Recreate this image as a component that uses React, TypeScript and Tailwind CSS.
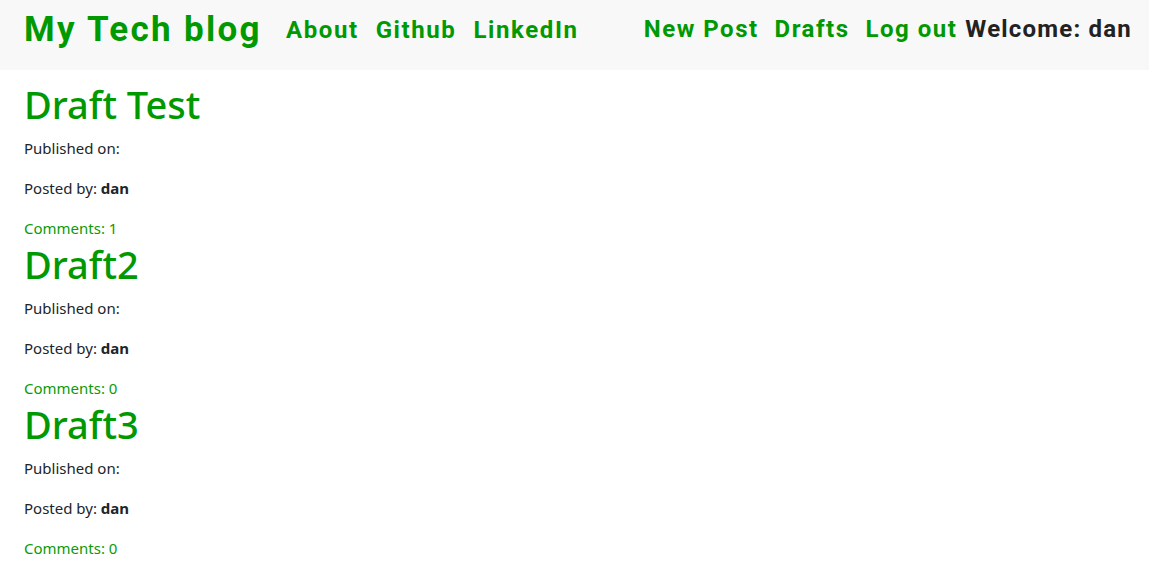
import React from "react";

const POSTS = [
  { title: "Draft Test", author: "dan", comments: 1 },
  { title: "Draft2", author: "dan", comments: 0 },
  { title: "Draft3", author: "dan", comments: 0 },
];

const navFont = { fontFamily: "Roboto, 'Liberation Sans', sans-serif" };

export default function App() {
  return (
    <div className="min-h-screen bg-white text-[#212529]" style={{ fontFamily: "'Noto Sans', 'Open Sans', sans-serif" }}>
      {/* Header */}
      <header
        className="flex h-[70px] items-start justify-between bg-[#f8f8f8] pl-[24px] pr-[17px] pt-[8px]"
        style={navFont}
      >
        <div className="flex items-center gap-[24px]">
          <a className="text-[35px] font-bold leading-[44px] tracking-[2.3px] text-[#009900]">My Tech blog</a>
          <nav className="flex items-center gap-[17px] text-[24px] font-bold tracking-[1.6px] text-[#009900]">
            <a>About</a>
            <a>Github</a>
            <a>LinkedIn</a>
          </nav>
        </div>
        <div className="flex items-center pt-[5px] text-[24px] font-bold leading-[32px] tracking-[1.5px]">
          <nav className="flex gap-[16px] text-[#009900]">
            <a>New Post</a>
            <a>Drafts</a>
            <a>Log out</a>
          </nav>
          <span className="ml-[8px] tracking-[1.2px] text-[#222]">Welcome: dan</span>
        </div>
      </header>

      {/* Posts */}
      <main className="px-[24px] pt-[10px]">
        {POSTS.map((post, i) => (
          <div key={i}>
            <h2 className="mb-[8px] text-[38px] font-medium leading-[48px] text-[#009900]">{post.title}</h2>
            <p className="mb-[16px] text-[15px] leading-[24px]">Published on:</p>
            <p className="mb-[16px] text-[15px] leading-[24px]">
              Posted by: <b>{post.author}</b>
            </p>
            <a className="block text-[15px] leading-[24px] text-[#0a9a0a]">Comments: {post.comments}</a>
          </div>
        ))}
      </main>
    </div>
  );
}
